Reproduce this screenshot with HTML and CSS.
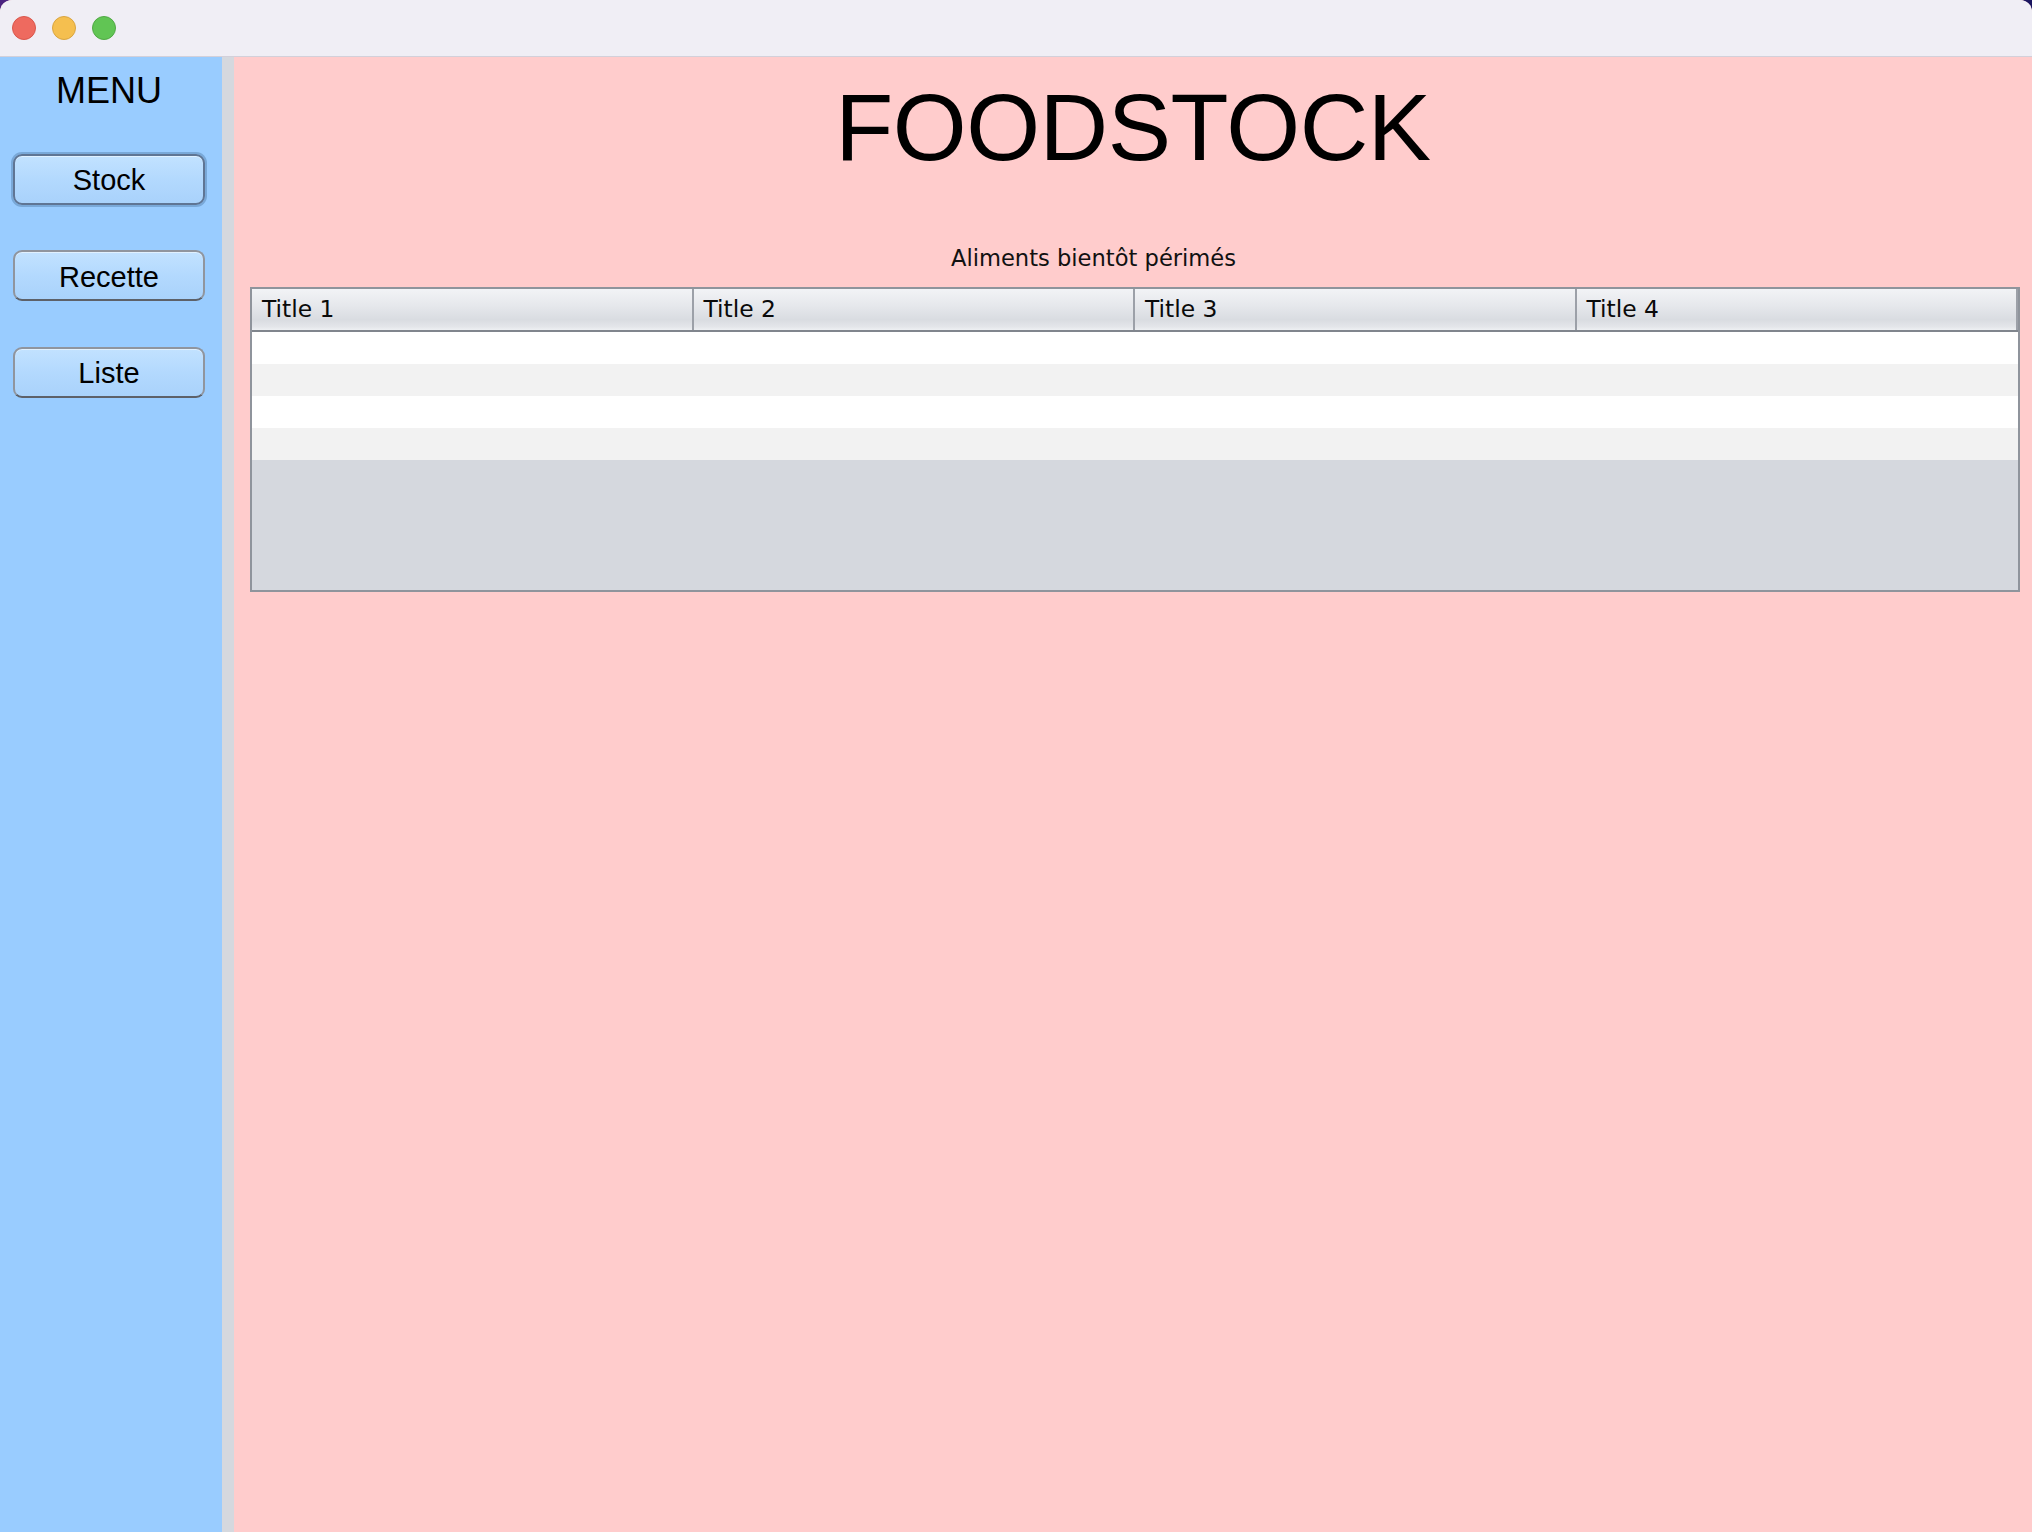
FILE: index.html
```html
<!DOCTYPE html>
<html lang="fr">
<head>
<meta charset="utf-8">
<title>FOODSTOCK</title>
<link rel="stylesheet" href="styles.css">
</head>
<body>
<div class="window">
  <header class="titlebar">
    <span class="light red"></span>
    <span class="light yellow"></span>
    <span class="light green"></span>
  </header>
  <div class="body">
    <aside class="sidebar">
      <div class="menu-title">MENU</div>
      <nav class="menu">
        <button class="btn focused">Stock</button>
        <button class="btn">Recette</button>
        <button class="btn">Liste</button>
      </nav>
    </aside>
    <div class="divider"></div>
    <main class="main">
      <h1 class="app-title">FOODSTOCK</h1>
      <div class="subtitle">Aliments bientôt périmés</div>
      <div class="table">
        <div class="thead">
          <div class="th">Title 1</div>
          <div class="th">Title 2</div>
          <div class="th">Title 3</div>
          <div class="th">Title 4</div>
        </div>
        <div class="tbody">
          <div class="tr"></div>
          <div class="tr alt"></div>
          <div class="tr"></div>
          <div class="tr alt"></div>
        </div>
      </div>
    </main>
  </div>
</div>
</body>
</html>
```

FILE: styles.css
```css
* { box-sizing: border-box; }
html, body { margin: 0; padding: 0; }
body {
  width: 2032px;
  height: 1532px;
  overflow: hidden;
  background: linear-gradient(90deg, #4b2380 0%, #2a1a70 60%, #1b1560 100%);
}
.window {
  width: 2032px;
  height: 1532px;
  display: flex;
  flex-direction: column;
  border-radius: 12px 12px 0 0;
  overflow: hidden;
  background: #ffcccc;
}
.titlebar {
  height: 57px;
  flex: none;
  background: #f0eef5;
  border-bottom: 1px solid #d3d0da;
  display: flex;
  align-items: center;
  gap: 16px;
  padding: 0 0 1px 12px;
}
.light {
  width: 24px;
  height: 24px;
  border-radius: 50%;
  display: block;
}
.red { background: #ee6a5f; border: 1px solid #d9574c; }
.yellow { background: #f5bf4f; border: 1px solid #d9a541; }
.green { background: #61c554; border: 1px solid #51a945; }

.body {
  flex: 1;
  display: flex;
}
.sidebar {
  width: 222px;
  flex: none;
  background: #99ccff;
  display: flex;
  flex-direction: column;
  align-items: center;
  padding-top: 16px;
}
.menu-title {
  font-family: "Liberation Sans", Arial, sans-serif;
  font-size: 36px;
  line-height: 36px;
  color: #000;
  padding-right: 4px;
}
.menu {
  display: flex;
  flex-direction: column;
  gap: 45.5px;
  margin-top: 44.5px;
  padding-right: 4px;
}
.btn {
  width: 192px;
  height: 51px;
  border-radius: 9px;
  border: 2px solid #90959e;
  border-bottom-color: #5d6169;
  background: linear-gradient(#c2e2ff, #b3d9fe 50%, #a9d2fb);
  font-family: "Liberation Sans", Arial, sans-serif;
  font-size: 29px;
  color: #000;
  padding: 3px 0 0 0;
  box-shadow: inset 0 1px 0 rgba(255,255,255,0.5);
}
.btn.focused {
  border-color: #5f7594;
  box-shadow: 0 0 0 2px #79a8d8, inset 0 1px 0 rgba(255,255,255,0.5);
}
.divider {
  width: 12px;
  flex: none;
  background: #d5d8de;
}
.main {
  flex: 1;
  background: #ffcccc;
  display: flex;
  flex-direction: column;
  padding-top: 22px;
}
.app-title {
  margin: 0;
  font-family: "Liberation Sans", Arial, sans-serif;
  font-weight: normal;
  font-size: 95px;
  line-height: 96px;
  text-align: center;
  color: #000;
  letter-spacing: -0.5px;
}
.subtitle {
  margin-top: 70px;
  font-family: "DejaVu Sans", Verdana, sans-serif;
  font-size: 22.6px;
  line-height: 26px;
  text-align: center;
  color: #111;
  padding-right: 79px;
}
.table {
  margin: 16px 12px 0 16px;
  height: 305px;
  border: 2px solid #8f949c;
  background: #d5d8de;
  display: flex;
  flex-direction: column;
}
.thead {
  height: 43px;
  display: flex;
  border-bottom: 2px solid #80858d;
  background: linear-gradient(#f2f3f6 0%, #e6e8ec 40%, #d9dce1 75%, #e4e6ea 92%, #eef0f3 100%);
}
.th {
  flex: 1;
  border-right: 2px solid #9ca0a8;
  font-family: "DejaVu Sans", Verdana, sans-serif;
  font-size: 23.4px;
  line-height: 41px;
  padding-left: 10px;
  color: #0a0a0a;
}
.tr {
  height: 32px;
  background: #ffffff;
}
.tr.alt {
  background: #f2f2f2;
}
```
